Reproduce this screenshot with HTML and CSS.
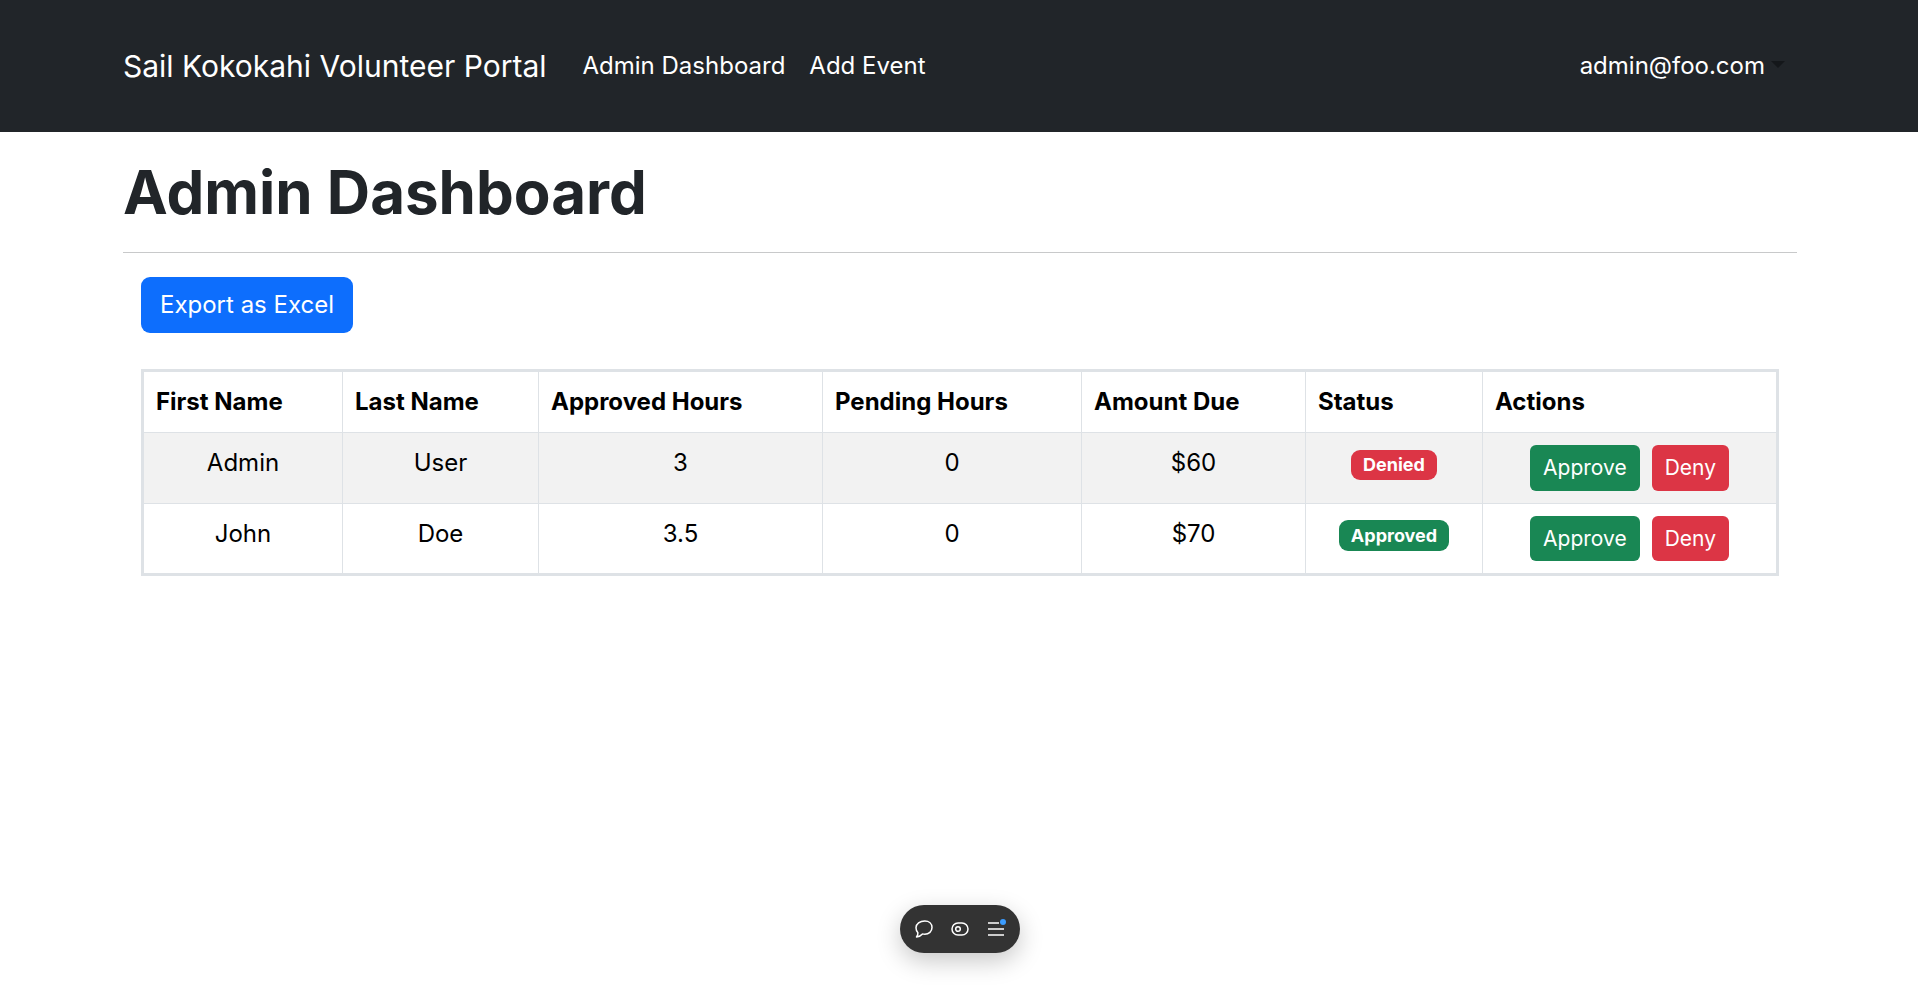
FILE: index.html
```html
<!DOCTYPE html>
<html lang="en">
<head>
  <meta charset="UTF-8">
  <title>Admin Dashboard</title>
  <meta name="viewport" content="width=device-width, initial-scale=1">
  <link rel="stylesheet" href="styles.css">
</head>
<body>
  <nav class="navbar">
    <a class="brand" href="#">Sail Kokokahi Volunteer Portal</a>
    <div class="nav-links">
      <a class="nav-link" href="#">Admin Dashboard</a>
      <a class="nav-link" href="#">Add Event</a>
    </div>
    <a class="nav-link user-menu" href="#">admin@foo.com<span class="caret"></span></a>
  </nav>

  <main class="page">
    <h1>Admin Dashboard</h1>
    <hr>
    <div class="content">
      <button class="btn btn-blue">Export as Excel</button>

      <table class="hours-table">
        <thead>
          <tr>
            <th class="col-first">First Name</th>
            <th class="col-last">Last Name</th>
            <th class="col-approved">Approved Hours</th>
            <th class="col-pending">Pending Hours</th>
            <th class="col-amount">Amount Due</th>
            <th class="col-status">Status</th>
            <th>Actions</th>
          </tr>
        </thead>
        <tbody>
          <tr class="striped">
            <td>Admin</td>
            <td>User</td>
            <td>3</td>
            <td>0</td>
            <td>$60</td>
            <td><span class="badge badge-red">Denied</span></td>
            <td>
              <div class="actions">
                <button class="btn btn-sm btn-green">Approve</button>
                <button class="btn btn-sm btn-red">Deny</button>
              </div>
            </td>
          </tr>
          <tr>
            <td>John</td>
            <td>Doe</td>
            <td>3.5</td>
            <td>0</td>
            <td>$70</td>
            <td><span class="badge badge-green">Approved</span></td>
            <td>
              <div class="actions">
                <button class="btn btn-sm btn-green">Approve</button>
                <button class="btn btn-sm btn-red">Deny</button>
              </div>
            </td>
          </tr>
        </tbody>
      </table>
    </div>
  </main>

  <div class="dev-toolbar">
    <svg class="tool-icon" viewBox="0 0 18 18" fill="none" stroke="#fff" stroke-width="1.5" stroke-linejoin="round">
      <path d="M9.800 1C14 1 17 3.700 17 7.600c0 3.900-3.100 6.600-7.200 6.600-.8 0-1.600-.1-2.300-.3C6.200 15.400 4 16.600 1.500 17c1-1.300 1.500-2.600 1.400-4.200C1.700 11.500 1 9.700 1 7.800 1 3.900 4.900 1 9.800 1z"/>
    </svg>
    <svg class="tool-icon" viewBox="0 0 18 18" fill="none" stroke="#fff" stroke-width="1.5">
      <rect x="1" y="3" width="16" height="12" rx="6"/>
      <circle cx="7" cy="9" r="2.300"/>
    </svg>
    <span class="menu-icon">
      <svg class="tool-icon" viewBox="0 0 18 18" fill="none" stroke="#fff" stroke-width="1.500">
        <path d="M1 3h11M1 9h16M1 15h16"/>
      </svg>
      <span class="notify-dot"></span>
    </span>
  </div>
</body>
</html>
```

FILE: styles.css
```css
* {
  box-sizing: border-box;
}

body {
  margin: 0;
  font-family: 'Inter', sans-serif;
  font-size: 24px;
  line-height: 1.5;
  color: #212529;
  background: #fff;
}

a {
  text-decoration: none;
}

.navbar {
  display: flex;
  align-items: center;
  height: 132px;
  padding: 0 121px 0 123px;
  background: #212529;
}

.brand {
  margin-right: 24px;
  padding: 7.5px 0;
  font-size: 30px;
  color: #fff;
}

.nav-links {
  display: flex;
  flex-grow: 1;
}

.nav-link {
  padding: 12px;
  color: #fff;
}

.caret {
  display: inline-block;
  margin-left: 6px;
  vertical-align: 6px;
  border-top: 7.2px solid #14171a;
  border-left: 7.2px solid transparent;
  border-right: 7.2px solid transparent;
}

.page {
  margin: 0 121px 0 123px;
  padding-top: 24px;
}

h1 {
  margin: 0;
  font-size: 60px;
  font-weight: 700;
  line-height: 1.2;
}

hr {
  margin: 24px 0;
  border: 0;
  border-top: 1px solid #c8c9ca;
}

.content {
  padding: 0 18px;
}

.btn {
  display: inline-block;
  padding: 9px 18px;
  border: 1px solid transparent;
  border-radius: 9px;
  font-family: inherit;
  font-size: 24px;
  line-height: 1.5;
  color: #fff;
}

.btn-sm {
  padding: 6px 12px;
  border-radius: 6px;
  font-size: 21px;
}

.btn-blue {
  background: #0d6efd;
}

.btn-green {
  background: #198754;
}

.btn-red {
  background: #dc3545;
}

.hours-table {
  width: 100%;
  margin-top: 36px;
  border-collapse: collapse;
  border: 3px solid #dee2e6;
  color: #000;
  table-layout: fixed;
}

.hours-table th,
.hours-table td {
  padding: 12px;
  border: 1px solid #dee2e6;
  vertical-align: top;
}

.hours-table th {
  text-align: left;
  font-weight: 700;
}

.hours-table td {
  text-align: center;
}

.col-first {
  width: 200px;
}

.col-last {
  width: 196px;
}

.col-approved {
  width: 284px;
}

.col-pending {
  width: 259px;
}

.col-amount {
  width: 224px;
}

.col-status {
  width: 177px;
}

.striped td {
  background: #f2f2f2;
}

.badge {
  display: inline-block;
  padding: 6.3px 11.7px;
  border-radius: 9px;
  font-size: 18px;
  font-weight: 700;
  line-height: 1;
  color: #fff;
}

.badge-red {
  background: #dc3545;
}

.badge-green {
  background: #198754;
}

.actions {
  display: flex;
  justify-content: center;
  gap: 12px;
}

.dev-toolbar {
  position: fixed;
  left: 900px;
  bottom: 41px;
  display: flex;
  align-items: center;
  justify-content: center;
  gap: 18px;
  width: 120px;
  height: 48px;
  border-radius: 24px;
  background: #333;
  box-shadow: 0 8px 24px rgba(0, 0, 0, 0.22);
}

.tool-icon {
  display: block;
  width: 18px;
  height: 18px;
}

.menu-icon {
  position: relative;
  display: block;
}

.notify-dot {
  position: absolute;
  top: -1px;
  right: -1px;
  width: 6px;
  height: 6px;
  border-radius: 50%;
  background: #3b9cff;
}
```
